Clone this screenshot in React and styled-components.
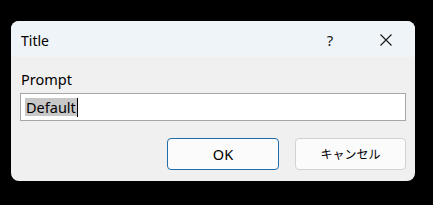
import React from "react"
import styled, { createGlobalStyle } from "styled-components"

const GlobalStyle = createGlobalStyle`
  html, body {
    margin: 0;
    padding: 0;
    background: #000;
  }
  body {
    font-family: "Noto Sans", "Noto Sans CJK JP", sans-serif;
  }
`

const Screen = styled.div`
  width: 433px;
  height: 205px;
  box-sizing: border-box;
  padding: 21px 0 0 11px;
  background: #000;
`

const Window = styled.div`
  width: 404px;
  height: 160px;
  border-radius: 8px;
  overflow: hidden;
  background: #f0f0f0;
  display: flex;
  flex-direction: column;
`

const TitleBar = styled.div`
  height: 36px;
  flex-shrink: 0;
  display: flex;
  align-items: center;
  background: #eff4f9;
  padding-left: 10px;
`

const TitleText = styled.div`
  flex: 1;
  font-size: 14px;
  color: #000;
  padding-top: 2px;
`

const CaptionButton = styled.div`
  width: ${p => p.$w}px;
  height: 36px;
  display: flex;
  align-items: center;
  justify-content: center;
  font-size: 15px;
  color: #1a1a1a;
  padding-top: 1px;
  box-sizing: border-box;
`

const Content = styled.div`
  flex: 1;
  padding: 13px 9px 0 9px;
  display: flex;
  flex-direction: column;
`

const Label = styled.div`
  font-size: 14.5px;
  color: #000;
  padding-left: 1px;
  line-height: 19px;
`

const Input = styled.div`
  margin-top: 4px;
  height: 28px;
  box-sizing: border-box;
  border: 1px solid #a6a6a6;
  background: #fff;
  display: flex;
  align-items: center;
  padding-left: 4px;
`

const Selected = styled.span`
  background: #c8c8c8;
  color: #000;
  font-size: 14.5px;
  line-height: 18px;
  padding: 0 1px;
`

const Caret = styled.span`
  width: 1px;
  height: 19px;
  background: #000;
`

const ButtonRow = styled.div`
  margin-top: 17px;
  display: flex;
  justify-content: flex-end;
  gap: 16px;
`

const Button = styled.div`
  width: ${p => p.$w}px;
  height: 32px;
  box-sizing: border-box;
  border-radius: 4px;
  border: 1px solid ${p => (p.$primary ? "#1f6ca8" : "#d2d2d2")};
  background: #fbfbfb;
  display: flex;
  align-items: center;
  justify-content: center;
  font-size: ${p => p.$size}px;
  color: #000;
`

export default function App() {
  return (
    <>
      <GlobalStyle />
      <Screen>
        <Window>
          <TitleBar>
            <TitleText>Title</TitleText>
            <CaptionButton $w={54}>?</CaptionButton>
            <CaptionButton $w={58}>
              <svg width="12" height="12" viewBox="0 0 12 12">
                <path d="M0.5 0.5 L11.5 11.5 M11.5 0.5 L0.5 11.5" stroke="#1a1a1a" strokeWidth="1.1" fill="none" />
              </svg>
            </CaptionButton>
          </TitleBar>
          <Content>
            <Label>Prompt</Label>
            <Input>
              <Selected>Default</Selected>
              <Caret />
            </Input>
            <ButtonRow>
              <Button $w={112} $size={14.5} $primary>OK</Button>
              <Button $w={111} $size={12}>キャンセル</Button>
            </ButtonRow>
          </Content>
        </Window>
      </Screen>
    </>
  )
}
